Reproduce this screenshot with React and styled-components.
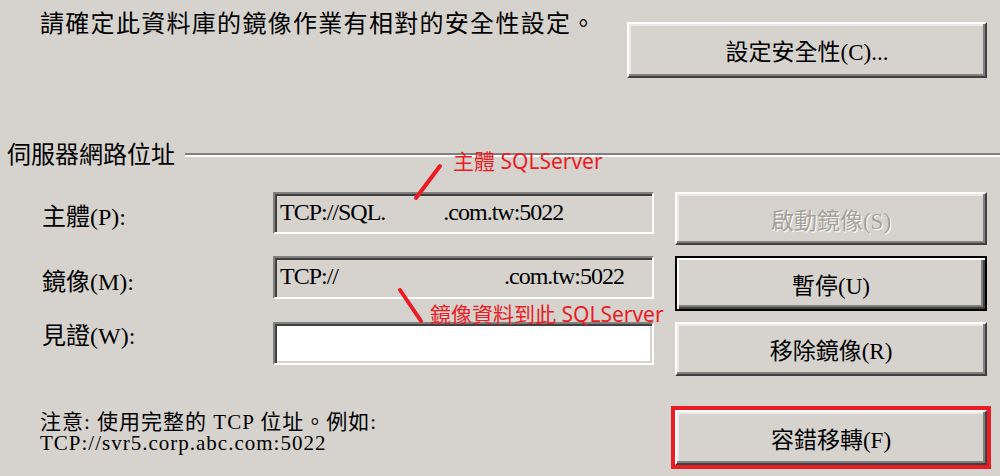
import styled, { createGlobalStyle } from "styled-components"

const ui = `"Liberation Serif", "Noto Sans CJK TC", serif`
const red = "#ec1c24"

const GlobalStyle = createGlobalStyle`
  html, body { margin: 0; padding: 0; }
  body { background: #d6d3ce; }
`

const Page = styled.div`
  position: relative;
  width: 1000px;
  height: 476px;
  overflow: hidden;
  background: #d6d3ce;
  color: #000;
  font-family: ${ui};
  display: flex;
  flex-direction: column;
`

const TopRow = styled.div`
  display: flex;
  align-items: flex-start;
  padding-right: 13px;
`

const Message = styled.div`
  margin: 10px 0 0 40px;
  font-size: 24px;
  letter-spacing: 1.3px;
  line-height: 28px;
`

const Button = styled.button`
  box-sizing: border-box;
  width: ${p => p.$w || 312}px;
  height: ${p => p.$h || 53}px;
  margin: 0;
  padding: 0;
  font-family: ${ui};
  font-size: 23px;
  color: #000;
  background: #d6d3ce;
  border-style: solid;
  border-width: 2px;
  border-color: #fff #404040 #404040 #fff;
  box-shadow: inset -2px -2px 0 #808080, inset 2px 2px 0 #ebe9e5;
  cursor: default;

  &:disabled {
    color: #a5a19b;
    text-shadow: 1px 1px 0 #fff;
  }
`

const DefaultButton = styled(Button)`
  border: 2px solid #000;
  box-shadow: inset 2px 2px 0 #fff, inset -2px -2px 0 #404040, inset -4px -4px 0 #808080;
`

const TopButton = styled(Button)`
  margin: 22px 0 0 auto;
`

const GroupHead = styled.div`
  display: flex;
  align-items: center;
  margin: 63px 0 0 7px;
`

const GroupTitle = styled.span`
  font-size: 24px;
  line-height: 28px;
`

const Rule = styled.div`
  flex: 1;
  margin-left: 10px;
  height: 2px;
  background: #808080;
  border-bottom: 2px solid #fff;
`

const Grid = styled.div`
  display: grid;
  grid-template-columns: 210px 381px 312px;
  column-gap: 21px;
  row-gap: 11px;
  align-items: start;
  margin-top: 23px;
  padding-left: 42px;
`

const Label = styled.div`
  margin-top: ${p => p.$top}px;
  font-size: 24px;
  line-height: 28px;
`

const Field = styled.div`
  box-sizing: border-box;
  display: flex;
  height: ${p => p.$h}px;
  padding: 4px 5px;
  font-size: 24px;
  letter-spacing: -1px;
  line-height: 28px;
  white-space: nowrap;
  background: ${p => (p.$white ? "#fff" : "#d6d3ce")};
  border-style: solid;
  border-width: 2px;
  border-color: #808080 #fff #fff #808080;
  box-shadow: inset 2px 2px 0 #404040, inset -2px -2px 0 #d6d3ce;
`

const Blank = styled.span`
  display: inline-block;
  width: ${p => p.$w}px;
`

const BottomRow = styled.div`
  display: flex;
  align-items: flex-start;
  margin-top: 30px;
  padding: 0 9px 0 40px;
`

const Note = styled.div`
  margin-top: 6px;
  font-size: 21px;
  letter-spacing: 1px;
  line-height: 21px;
`

const Highlight = styled.div`
  margin-left: auto;
  display: flex;
  border: 4px solid ${red};
`

const Overlay = styled.svg`
  position: absolute;
  inset: 0;
  pointer-events: none;
`

const Callout = styled.span`
  position: absolute;
  left: ${p => p.$x}px;
  top: ${p => p.$y}px;
  font-family: "Noto Sans", "Noto Sans CJK TC", sans-serif;
  font-size: 21px;
  line-height: 24px;
  color: ${red};
  white-space: nowrap;
`

export default function App() {
  return (
    <Page>
      <GlobalStyle />
      <TopRow>
        <Message>請確定此資料庫的鏡像作業有相對的安全性設定。</Message>
        <TopButton $w={360} $h={56}>設定安全性(C)...</TopButton>
      </TopRow>

      <GroupHead>
        <GroupTitle>伺服器網路位址</GroupTitle>
        <Rule />
      </GroupHead>

      <Grid>
        <Label $top={11}>主體(P):</Label>
        <Field $h={42}>
          TCP://SQL.<Blank $w={58} />.com.tw:5022
        </Field>
        <Button disabled>啟動鏡像(S)</Button>

        <Label $top={12}>鏡像(M):</Label>
        <Field $h={43}>
          TCP://<Blank $w={166} />.com.tw:5022
        </Field>
        <DefaultButton $h={55}>暫停(U)</DefaultButton>

        <Label $top={0}>見證(W):</Label>
        <Field $h={43} $white />
        <Button $h={54}>移除鏡像(R)</Button>
      </Grid>

      <BottomRow>
        <Note>
          注意: 使用完整的 TCP 位址。例如:
          <br />
          TCP://svr5.corp.abc.com:5022
        </Note>
        <Highlight>
          <Button $h={55}>容錯移轉(F)</Button>
        </Highlight>
      </BottomRow>

      <Overlay width="1000" height="476" viewBox="0 0 1000 476">
        <line x1="440" y1="166" x2="416" y2="198" stroke={red} strokeWidth="4" strokeLinecap="round" />
        <line x1="400" y1="290" x2="421" y2="321" stroke={red} strokeWidth="4" strokeLinecap="round" />
      </Overlay>
      <Callout $x={453} $y={149}>主體 SQLServer</Callout>
      <Callout $x={430} $y={302}>鏡像資料到此 SQLServer</Callout>
    </Page>
  )
}
